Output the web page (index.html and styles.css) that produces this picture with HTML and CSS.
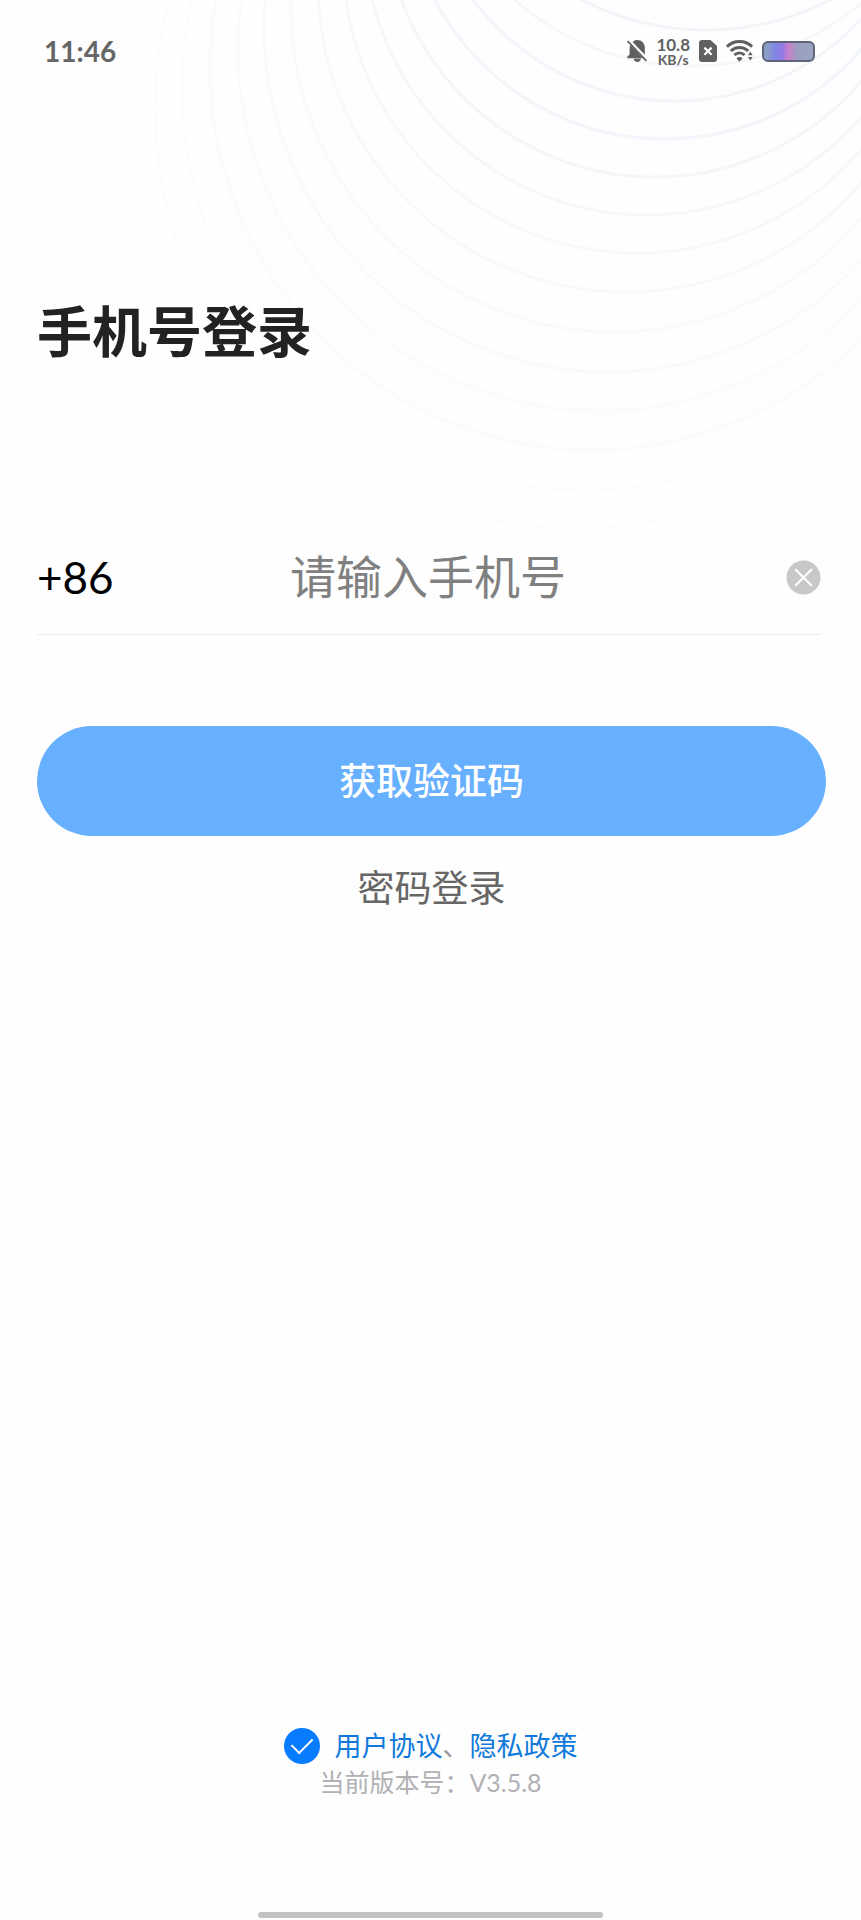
FILE: index.html
```
<!DOCTYPE html>
<html lang="zh-CN">
  <head>
    <meta charset="UTF-8" />
    <meta name="viewport" content="width=device-width, initial-scale=1.0" />
    <title>手机号登录</title>
    <link rel="stylesheet" href="styles.css">
  </head>
  <body>
    <!-- Background rings -->
    <svg class="rings" width="861" height="540" viewBox="0 0 861 540" aria-hidden="true">
      <circle cx="706" cy="-240" r="270" stroke-opacity="1" />
      <circle cx="690" cy="-199" r="265" stroke-opacity="0.7" />
      <circle cx="675" cy="-151" r="252" stroke-opacity="0.9" />
      <circle cx="665" cy="-121" r="260" stroke-opacity="0.9" />
      <circle cx="655" cy="-93" r="270" stroke-opacity="0.8" />
      <circle cx="647" cy="-68" r="283" stroke-opacity="0.7" />
      <circle cx="637" cy="-41" r="294" stroke-opacity="0.6" />
      <circle cx="626" cy="-16" r="308" stroke-opacity="0.5" />
      <circle cx="615" cy="8" r="324" stroke-opacity="0.4" />
      <circle cx="608" cy="28" r="344" stroke-opacity="0.35" />
      <circle cx="600" cy="49" r="362" stroke-opacity="0.3" />
      <circle cx="592" cy="68" r="382" stroke-opacity="0.25" />
      <circle cx="584" cy="88" r="402" stroke-opacity="0.2" />
      <circle cx="576" cy="107" r="421" stroke-opacity="0.15" />
    </svg>

    <header class="status-bar">
      <span class="time">11:46</span>
      <div class="status-icons">
        <svg class="icon-bell" width="20" height="22" viewBox="0 0 20 22">
          <path fill="#5f6062" d="M3.600 5 L15.600 18.200 H.4 V16.600 L2.600 14.400 V8.400 C2.600 7 3 6 3.600 5Z M5.600 2 C7 .6 8.600 0 10.400 0 C14.600 0 17.800 3.400 17.800 7.600 V14.800Z M6.600 18.800 H14 C13.600 20.800 12.200 22 10.300 22 C8.400 22 7 20.800 6.600 18.800Z" />
          <path stroke="#5f6062" stroke-width="1.800" d="M.6 1.200 L19.400 20.800" />
        </svg>
        <span class="speed"><b>10.8</b><small>KB/s</small></span>
        <svg class="icon-sim" width="18" height="22" viewBox="0 0 18 22">
          <path fill="#5f6062" d="M3 0 H11.500 L18 6 V19 Q18 22 15 22 H3 Q0 22 0 19 V3 Q0 0 3 0Z" />
          <path stroke="#fff" stroke-width="2.200" d="M5.400 7.600 L12.600 14.800 M12.600 7.600 L5.400 14.800" />
        </svg>
        <svg class="icon-wifi" width="27" height="22" viewBox="0 0 27 22">
          <g fill="none" stroke="#5f6062" stroke-width="3">
            <path d="M.9 6.600 C8 -.2 19 -.2 26.100 6.600" />
            <path d="M4.800 11 C9.800 6.200 17.200 6.200 22.200 11" />
            <path d="M8.400 15 C11.400 12.200 15.600 12.200 18.600 15" />
          </g>
          <path fill="#5f6062" d="M10.400 18.200 Q13.500 15.800 16.600 18.200 L13.500 21.800Z M22 15.200 L24.300 11.600 L26.600 15.200Z M22 17 L24.300 20.600 L26.600 17Z" />
        </svg>
        <span class="battery"></span>
      </div>
    </header>

    <main class="login">
      <h1>手机号登录</h1>
      <form id="loginForm">
        <div class="phone-row">
          <label for="phoneInput">+86</label>
          <input type="tel" id="phoneInput" placeholder="请输入手机号" />
          <button type="button" class="clear-btn" aria-label="清除">
            <svg width="35" height="35" viewBox="0 0 36 36">
              <circle cx="18" cy="18" r="17.500" fill="#c8c8c8" />
              <path stroke="#fff" stroke-width="2.200" stroke-linecap="round" d="M10 10 L26 26 M26 10 L10 26" />
            </svg>
          </button>
        </div>
        <button type="submit" class="code-btn">获取验证码</button>
      </form>
      <a href="#" class="password-link">密码登录</a>
    </main>

    <footer>
      <div class="agreement">
        <input type="checkbox" id="agreeCheckbox" aria-label="同意用户协议、隐私政策" checked />
        <span><a href="#">用户协议</a>、<a href="#">隐私政策</a></span>
      </div>
      <p class="version">当前版本号：V3.5.8</p>
      <div class="home-bar"></div>
    </footer>
  </body>
</html>
```
FILE: styles.css
```
* {
  box-sizing: border-box;
}

body {
  margin: 0;
  min-height: 100vh;
  display: flex;
  flex-direction: column;
  position: relative;
  overflow-x: hidden;
  background: #fefefe;
  font-family: Lato, "Noto Sans CJK SC", sans-serif;
}

button,
input {
  font-family: inherit;
  border: none;
  padding: 0;
  margin: 0;
}

a {
  text-decoration: none;
}

/* Background rings */
.rings {
  position: absolute;
  top: 0;
  right: 0;
  z-index: -1;
  fill: none;
  stroke: #f1f4f8;
  stroke-width: 3;
}

/* Status bar */
.status-bar {
  display: flex;
  justify-content: space-between;
  align-items: center;
  height: 102px;
  padding: 0 46px 0 44px;
}

.time {
  font-size: 28px;
  line-height: 34px;
  font-weight: 700;
  color: #666;
}

.status-icons {
  display: flex;
  align-items: center;
  gap: 9px;
}

.speed {
  display: flex;
  flex-direction: column;
  align-items: center;
  color: #626262;
}

.speed b {
  font-size: 17px;
  line-height: 17px;
}

.speed small {
  font-size: 14px;
  font-weight: 700;
  line-height: 14px;
}

.battery {
  width: 53px;
  height: 21px;
  border: 2px solid #5f6479;
  border-radius: 6px;
  background: linear-gradient(90deg, #8a9cc8 8%, #7f86e6 22%, #9379e2 38%, #c47fcf 48%, #bd88c6 56%, #9b9fbf 68%, #9ba4c2);
}

/* Login form */
.login {
  padding: 0 35px 0 37px;
}

h1 {
  margin: 196px 0 156px;
  font-size: 55px;
  line-height: 66px;
  font-weight: 700;
  color: #222;
}

.phone-row {
  display: flex;
  align-items: center;
  height: 115px;
  margin-right: 5px;
  border-bottom: 1px solid #ececec;
}

.phone-row label {
  width: 253px;
  font-size: 44px;
  color: #000;
}

.phone-row input {
  flex: 1;
  min-width: 0;
  height: 70px;
  font-size: 46px;
  line-height: 70px;
  color: #000;
  background: transparent;
  outline: none;
}

.phone-row input::placeholder {
  color: #808080;
  opacity: 1;
}

.clear-btn {
  display: flex;
  background: none;
}

.code-btn {
  display: block;
  width: 100%;
  height: 110px;
  margin-top: 91px;
  border-radius: 55px;
  background: #66b0ff;
  color: #fff;
  font-size: 37px;
  line-height: 52px;
  font-weight: 500;
}

.password-link {
  display: block;
  width: fit-content;
  margin: 26px auto 0;
  font-size: 37px;
  line-height: 52px;
  color: #666;
}

/* Footer */
footer {
  margin-top: auto;
  padding-bottom: 2px;
}

.agreement {
  display: flex;
  justify-content: center;
  align-items: center;
  gap: 15px;
  font-size: 27px;
  line-height: 36px;
  color: #999;
}

.agreement a {
  color: #1079dc;
}

.agreement input {
  appearance: none;
  display: flex;
  justify-content: center;
  align-items: center;
  width: 36px;
  height: 36px;
  border-radius: 50%;
  border: 2px solid #c8c8c8;
}

.agreement input:checked {
  border: none;
  background: #087cff;
}

.agreement input:checked::after {
  content: "";
  width: 18px;
  height: 10px;
  margin-bottom: 6px;
  border-left: 2px solid #fff;
  border-bottom: 2px solid #fff;
  transform: rotate(-45deg);
}

.version {
  margin: 0 0 112px;
  text-align: center;
  font-size: 25px;
  line-height: 36px;
  color: #b1b1b5;
}

.home-bar {
  width: 40%;
  height: 6px;
  margin: 0 auto;
  border-radius: 3px;
  background: #c2c2c2;
}
```
